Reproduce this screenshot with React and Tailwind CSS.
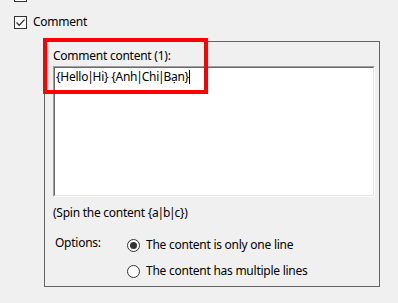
import { useState } from 'react';

function CheckBox({ checked }) {
  return (
    <span className="w-[13px] h-[13px] border border-[#333333] bg-white flex items-center justify-center shrink-0">
      {checked && (
        <svg width="11" height="11" viewBox="0 0 11 11">
          <path d="M1.5 5.5 L4.2 8.2 L9.5 2.6" fill="none" stroke="#333333" strokeWidth="1.3" />
        </svg>
      )}
    </span>
  );
}

function Radio({ checked, onClick }) {
  return (
    <span
      onClick={onClick}
      className="w-[13px] h-[13px] rounded-full border border-[#333333] bg-white flex items-center justify-center shrink-0"
    >
      {checked && <span className="w-[7px] h-[7px] rounded-full bg-[#333333]" />}
    </span>
  );
}

// Noto Sans puts wide side bearings on "|", pull them in a bit
function Spin({ text }) {
  const parts = text.split('|');
  return parts.map((p, i) => (
    <span key={i}>
      {p}
      {i < parts.length - 1 && <span className="mx-[-1px]">|</span>}
    </span>
  ));
}

export default function App() {
  const [multi, setMulti] = useState(false);

  return (
    <div
      className="relative w-[398px] h-[303px] overflow-hidden bg-[#f0f0f0] text-[12px] leading-[16px] tracking-[-0.25px] text-black"
      style={{ fontFamily: '"Noto Sans", "Segoe UI", sans-serif' }}
    >
      {/* row cut off at the top */}
      <div className="flex items-center gap-[6px] pl-[14px] mt-[-13px] h-[16px]">
        <CheckBox />
        <span>Line</span>
      </div>

      <div className="flex items-center gap-[6px] pl-[14px] mt-[11px] h-[16px]">
        <CheckBox checked />
        <span>Comment</span>
      </div>

      <div className="ml-[44px] mt-[11px] w-[336px] h-[246px] border border-[#646464] pl-[8px] pt-[6px]">
        <div>Comment content (1):</div>
        <div className="mt-[2px] w-[322px] h-[131px] border-t border-l border-[#a0a0a0] border-b-white border-r-white border-b border-r">
          <div className="w-full h-full bg-white border-t border-l border-[#696969] border-b border-r border-b-[#e3e3e3] border-r-[#e3e3e3] pl-[1px] pt-[1px]">
            <Spin text="{Hello|Hi} {Anh|Chi|Bạn}" />
            <span className="inline-block w-[1px] h-[14px] bg-black align-[-3px]" />
          </div>
        </div>

        <div className="mt-[8px]">
          (Spin the content <Spin text="{a|b|c}" />)
        </div>

        <div className="mt-[16px] flex">
          <div className="w-[74px] pl-[2px] mt-[-2px]">Options:</div>
          <div className="flex flex-col gap-[10px]">
            <div className="flex items-center gap-[6px] h-[16px]">
              <Radio checked={!multi} onClick={() => setMulti(false)} />
              <span>The content is only one line</span>
            </div>
            <div className="flex items-center gap-[6px] h-[16px]">
              <Radio checked={multi} onClick={() => setMulti(true)} />
              <span>The content has multiple lines</span>
            </div>
          </div>
        </div>
      </div>

      {/* red highlight annotation */}
      <div className="absolute left-[43px] top-[38px] w-[165px] h-[56px] border-[4px] border-[#ff0000] pointer-events-none" />
    </div>
  );
}
